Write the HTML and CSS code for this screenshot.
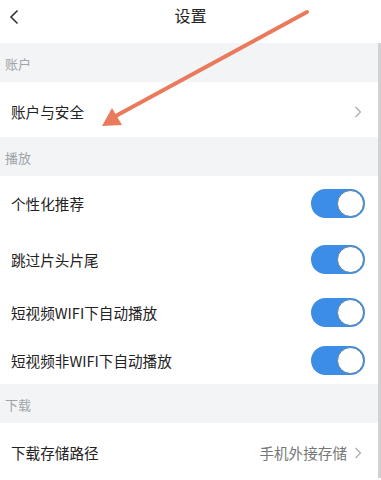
FILE: index.html
```html
<!DOCTYPE html>
<html lang="zh-CN">
<head>
    <meta charset="UTF-8">
    <meta name="viewport" content="width=device-width, initial-scale=1.0">
    <title>设置</title>
    <link rel="stylesheet" href="styles.css">
</head>
<body>
    <div class="page">
        <div class="topbar">
            <span class="back">
                <svg width="10" height="16" viewBox="0 0 10 16"><path d="M8.5 1.5 L2 8 L8.5 14.5" fill="none" stroke="#333" stroke-width="1.6"/></svg>
            </span>
            <span class="title">设置</span>
        </div>

        <div class="list">
            <div class="group-title">账户</div>
            <div class="row first">
                <span class="label">账户与安全</span>
                <span class="more"><svg width="8" height="12" viewBox="0 0 8 12"><path d="M1.5 1 L6.5 6 L1.5 11" fill="none" stroke="#aaa" stroke-width="1.2"/></svg></span>
            </div>

            <div class="group-title">播放</div>
            <div class="row r1">
                <span class="label">个性化推荐</span>
                <span class="switch on"><span class="knob"></span></span>
            </div>
            <div class="row r2">
                <span class="label">跳过片头片尾</span>
                <span class="switch on"><span class="knob"></span></span>
            </div>
            <div class="row r3">
                <span class="label">短视频WIFI下自动播放</span>
                <span class="switch on"><span class="knob"></span></span>
            </div>
            <div class="row r3">
                <span class="label">短视频非WIFI下自动播放</span>
                <span class="switch on"><span class="knob"></span></span>
            </div>

            <div class="group-title">下载</div>
            <div class="row first">
                <span class="label">下载存储路径</span>
                <span class="more"><span class="value">手机外接存储</span><svg width="8" height="12" viewBox="0 0 8 12"><path d="M1.5 1 L6.5 6 L1.5 11" fill="none" stroke="#aaa" stroke-width="1.2"/></svg></span>
            </div>
        </div>

        <!-- annotation arrow drawn over the screenshot -->
        <svg class="arrow" width="381" height="140" viewBox="0 0 381 140">
            <line x1="307" y1="12" x2="112" y2="118" stroke="#ea7a5c" stroke-width="4" stroke-linecap="round"/>
            <polygon points="102,126 112,108 122,125" fill="#ea7a5c"/>
        </svg>
    </div>
</body>
</html>
```

FILE: styles.css
```css
body {
    margin: 0;
    background: #fff;
    font-family: "Noto Sans CJK SC", "Noto Sans", sans-serif;
    color: #222;
}
.page {
    position: relative;
    width: 381px;
    height: 480px;
    overflow: hidden;
}
.topbar {
    height: 43px;
    display: flex;
    align-items: center;
    justify-content: center;
    position: relative;
    background: #fff;
}
.back {
    position: absolute;
    left: 9px;
    top: 6px;
}
.title {
    font-size: 16px;
    color: #222;
    margin-top: -14px;
}

/* list + scrollbar strip on the right */
.list {
    border-right: 3px solid #cfd1d3;
}
.group-title {
    height: 39px;
    line-height: 42px;
    padding-left: 5px;
    font-size: 13px;
    color: #a0a4a8;
    background: #f2f4f6;
}
.row {
    height: 52px;
    display: flex;
    align-items: center;
    justify-content: space-between;
    padding: 0 14px 0 11px;
    background: #fff;
    box-sizing: border-box;
}
.row.first {
    height: 55px;
    padding-top: 4px;
}
.row.r1 { height: 54px; }
.row.r2 { height: 58px; }
.row.r3 { height: 48px; }

.label {
    font-size: 14.6px;
}
.more {
    display: flex;
    align-items: center;
    gap: 7px;
    margin-right: 2px;
}
.value {
    font-size: 14.6px;
    color: #777;
}

/* toggle */
.switch {
    width: 54px;
    height: 29px;
    border-radius: 15px;
    background: #ccc;
    position: relative;
    box-sizing: border-box;
    margin-right: -1px;
}
.switch.on {
    background: #3b8de6;
}
.knob {
    position: absolute;
    right: 1px;
    top: 1px;
    width: 27px;
    height: 27px;
    border-radius: 50%;
    background: #fff;
    box-sizing: border-box;
    border: 1px solid #5a7e9e;
}

.arrow {
    position: absolute;
    left: 0;
    top: 0;
}
```
